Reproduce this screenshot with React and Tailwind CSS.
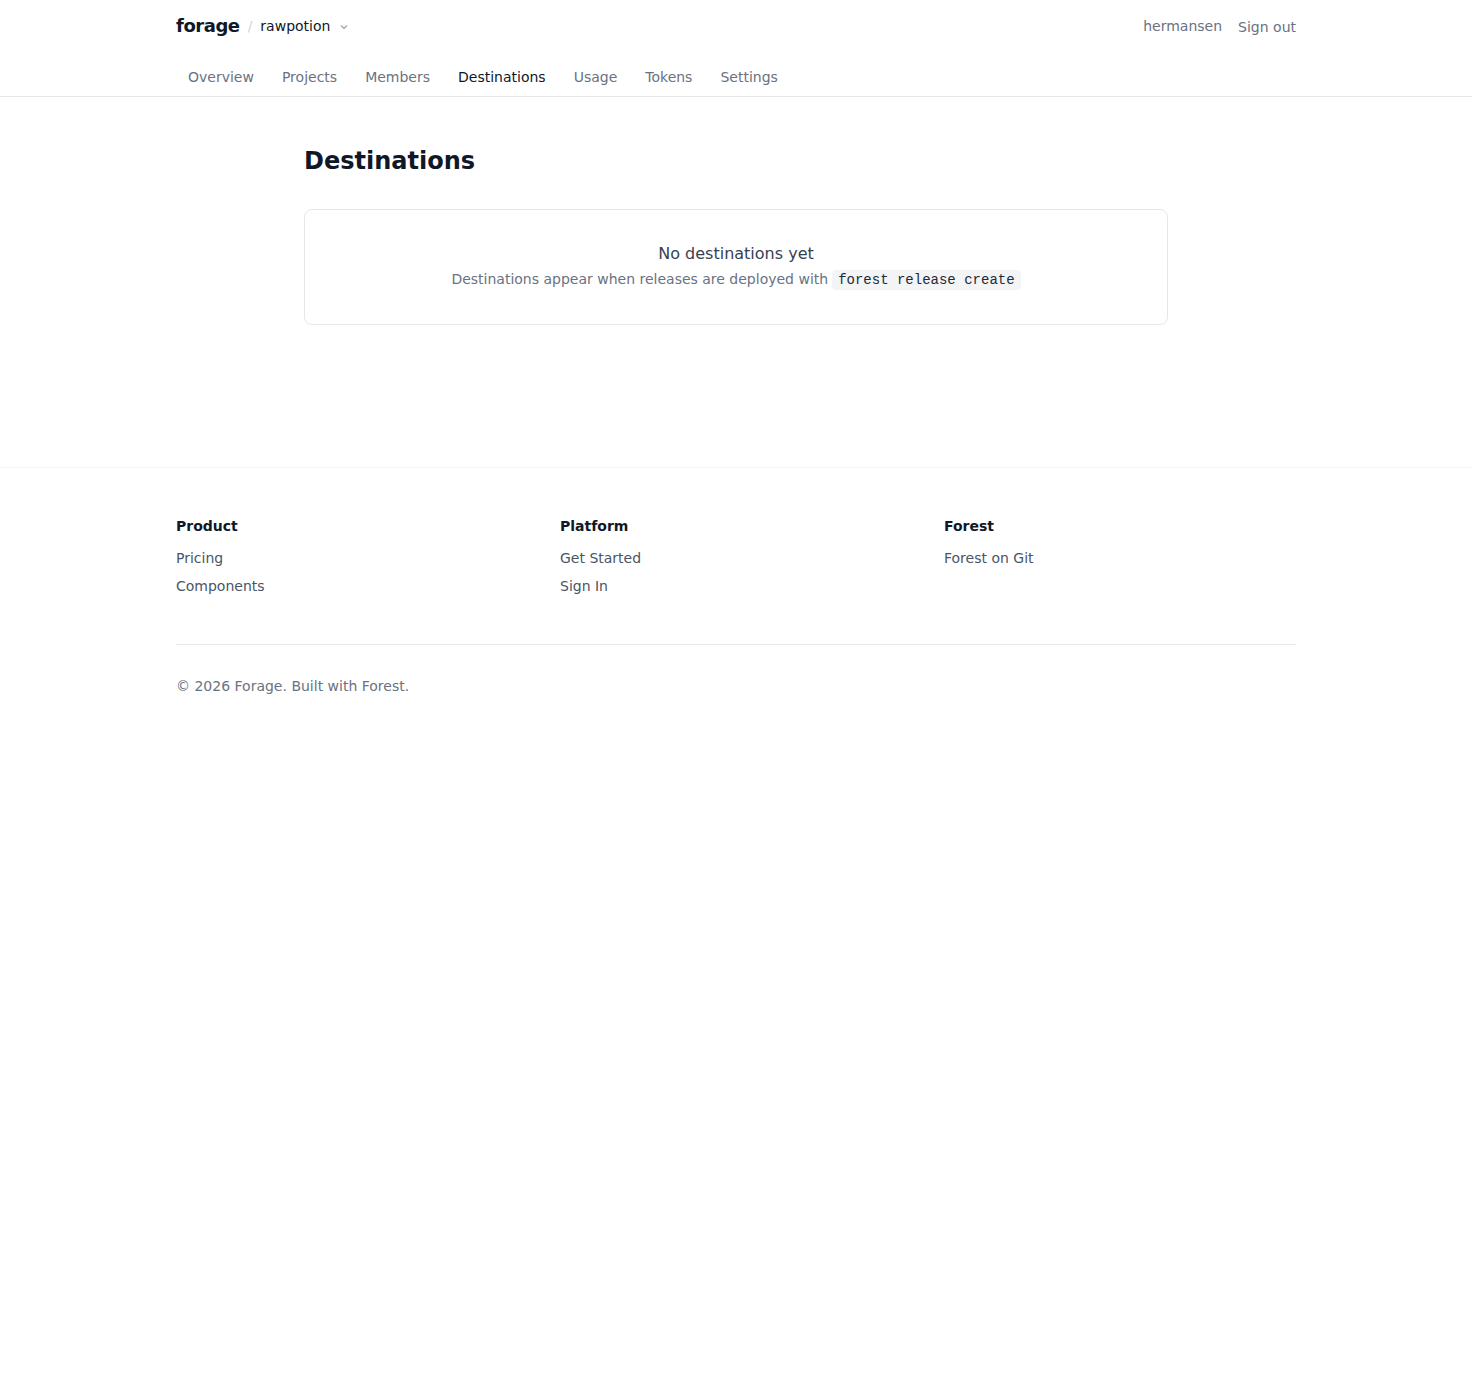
export default function App() {
  const tabs = ["Overview", "Projects", "Members", "Destinations", "Usage", "Tokens", "Settings"];
  return (
    <div className="min-h-screen bg-white text-gray-900" style={{ fontFamily: '"DejaVu Sans", sans-serif' }}>
      <header className="border-b border-gray-200">
        <div className="mx-auto max-w-[1120px]">
          <div className="flex h-[52px] items-center justify-between">
            <div className="flex items-center">
              <span className="-mt-0.5 text-[18px] font-bold tracking-tight text-gray-900">forage</span>
              <span className="ml-2 text-sm text-gray-300">/</span>
              <span className="ml-2 text-sm text-gray-900">rawpotion</span>
              <svg className="ml-2 mt-0.5 h-3 w-3 text-gray-400" viewBox="0 0 12 12" fill="none" stroke="currentColor" strokeWidth="1.2">
                <path d="M3 4.5l3 3 3-3" />
              </svg>
            </div>
            <div className="flex items-center gap-4 text-sm text-gray-500">
              <span>hermansen</span>
              <span className="mt-px">Sign out</span>
            </div>
          </div>
          <nav className="flex pt-[15px] pb-[9px] text-sm">
            {tabs.map((t) => (
              <span key={t} className={"px-3 leading-5 mr-1 " + (t === "Destinations" ? "text-gray-900" : "text-gray-500")}>
                {t}
              </span>
            ))}
          </nav>
        </div>
      </header>

      <main className="mx-auto max-w-[864px] pt-12 pb-[142px]">
        <h1 className="text-2xl font-bold leading-8 text-gray-900">Destinations</h1>
        <div className="mt-8 rounded-lg border border-gray-200 px-6 pt-8 pb-[35px] text-center">
          <div className="text-base leading-6 text-gray-700">No destinations yet</div>
          <div className="mt-[3px] flex h-5 items-center justify-center text-sm text-gray-500">
            <span>Destinations appear when releases are deployed with</span>
            <code className="ml-1 mt-[2px] rounded bg-gray-100 px-1.5 py-0.5 text-[14px] leading-4 text-gray-800" style={{ fontFamily: '"Liberation Mono", monospace' }}>
              forest release create
            </code>
          </div>
        </div>
      </main>

      <footer className="border-t border-gray-100">
        <div className="mx-auto max-w-[1120px] pt-12 pb-12">
          <div className="grid grid-cols-3 gap-8 text-sm">
            <div>
              <div className="font-semibold leading-5 text-gray-900">Product</div>
              <div className="mt-3 space-y-2 leading-5 text-gray-600">
                <div>Pricing</div>
                <div>Components</div>
              </div>
            </div>
            <div>
              <div className="font-semibold leading-5 text-gray-900">Platform</div>
              <div className="mt-3 space-y-2 leading-5 text-gray-600">
                <div>Get Started</div>
                <div>Sign In</div>
              </div>
            </div>
            <div>
              <div className="font-semibold leading-5 text-gray-900">Forest</div>
              <div className="mt-3 space-y-2 leading-5 text-gray-600">
                <div>Forest on Git</div>
              </div>
            </div>
          </div>
          <div className="mt-12 border-t border-gray-200 pt-[31px] text-sm leading-5 text-gray-500">
            © 2026 Forage. Built with Forest.
          </div>
        </div>
      </footer>
    </div>
  );
}
